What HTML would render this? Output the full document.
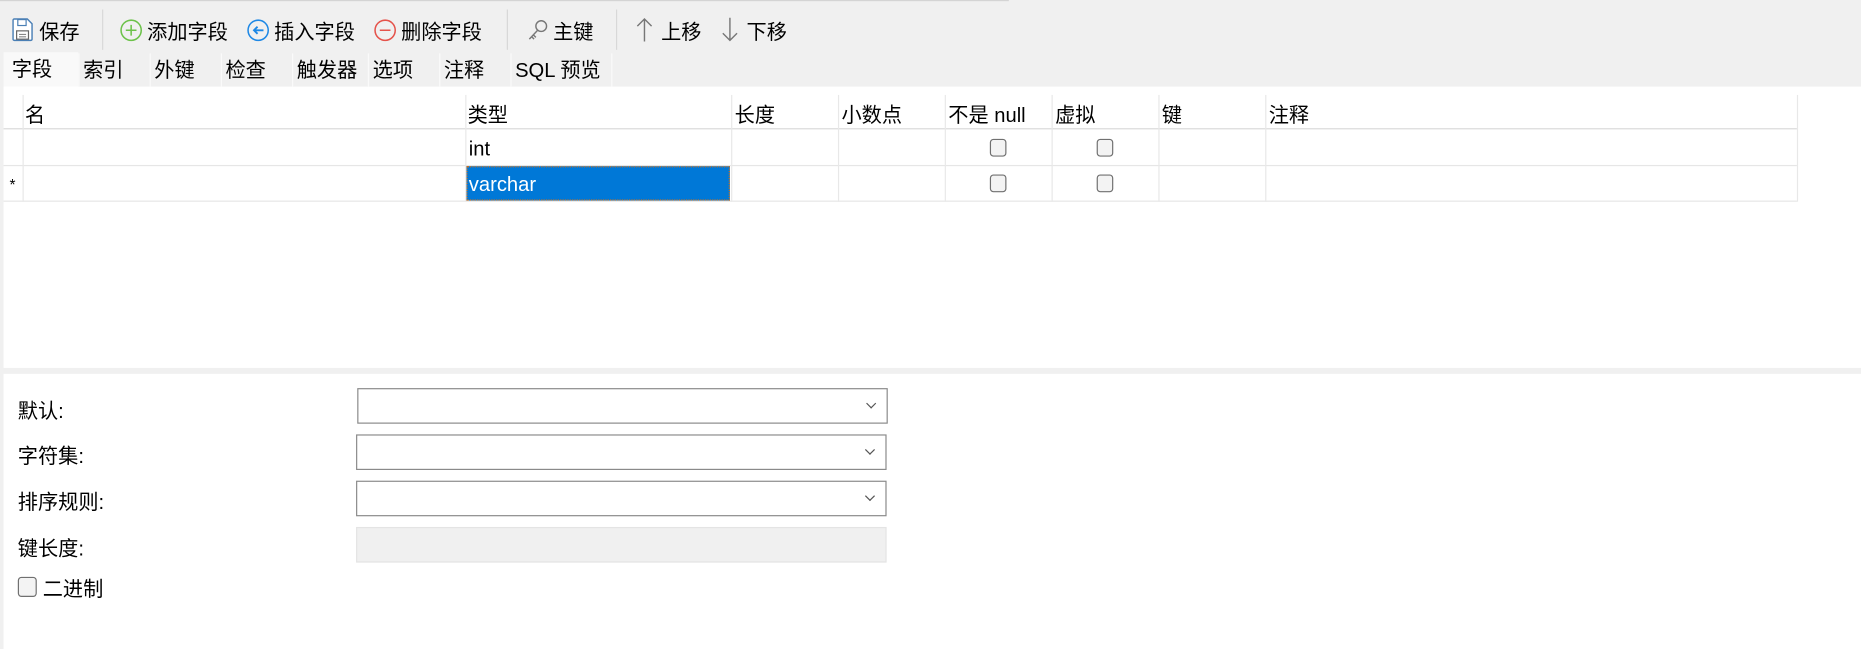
<!DOCTYPE html>
<html><head><meta charset="utf-8"><style>
html,body{margin:0;padding:0;width:1861px;height:649px;overflow:hidden;background:#f0f0f0}
#w{position:absolute;left:0;top:0;width:1568px;height:547px;transform:scale(1.18686);transform-origin:0 0;font-family:"Liberation Sans","Noto Sans CJK SC",sans-serif;font-size:17px;color:#000}
.a{position:absolute;white-space:nowrap;line-height:20px}
.sep{position:absolute;top:8px;width:1px;height:34px;background:#d8d8d8}
.tab{position:absolute;top:45px;height:28px;line-height:30px;background:#f0f0f0;border-left:1px solid #fafafa;padding-left:3px;box-sizing:border-box}
.vl{position:absolute;width:1px;background:#e8e8e8}
.hl{position:absolute;height:1px;background:#e6e6e6}
.cb{position:absolute;width:14px;height:15px;border:1px solid #707070;border-radius:3px;background:#f3f3f3;box-sizing:border-box}
.combo{position:absolute;left:300px;width:447px;height:30px;border:1px solid #8a8a8a;background:#fff;box-sizing:border-box}
.combo:after{content:"";position:absolute;right:10px;top:9px;width:5px;height:5px;border-right:1px solid #555;border-bottom:1px solid #555;transform:rotate(45deg)}
</style></head><body><div id="w">
<div style="position:absolute;left:0;top:0;width:850px;height:1px;background:#d4d4d4"></div>
<svg class="a" style="left:10px;top:15px" width="18" height="20" viewBox="0 0 18 20"><path d="M2 1h11l4 4v13a1 1 0 0 1-1 1H2a1 1 0 0 1-1-1V2a1 1 0 0 1 1-1z" fill="#fff" stroke="#4a7fb5" stroke-width="1.2"/><rect x="5" y="1.5" width="7" height="5" fill="none" stroke="#4a7fb5"/><rect x="4" y="11" width="10" height="7" fill="none" stroke="#666"/><path d="M6 14h6M6 16h6" stroke="#888"/></svg>
<div class="a" style="left:33px;top:18px">保存</div>
<div class="sep" style="left:86px"></div>
<svg class="a" style="left:101px;top:16px" width="19" height="19"><circle cx="9.5" cy="9.5" r="8.5" fill="none" stroke="#6cc24a" stroke-width="1.3"/><path d="M9.5 5v9M5 9.5h9" stroke="#6cc24a" stroke-width="1.3"/></svg>
<div class="a" style="left:124px;top:18px">添加字段</div>
<svg class="a" style="left:208px;top:16px" width="19" height="19"><circle cx="9.5" cy="9.5" r="8.5" fill="none" stroke="#1e88e5" stroke-width="1.3"/><path d="M14 9.5H6M9 6.5l-3 3 3 3" fill="none" stroke="#1e88e5" stroke-width="1.6"/></svg>
<div class="a" style="left:231px;top:18px">插入字段</div>
<svg class="a" style="left:315px;top:16px" width="19" height="19"><circle cx="9.5" cy="9.5" r="8.5" fill="none" stroke="#e5534b" stroke-width="1.3"/><path d="M5 9.5h9" stroke="#e5534b" stroke-width="1.3"/></svg>
<div class="a" style="left:338px;top:18px">删除字段</div>
<div class="sep" style="left:427px"></div>
<svg class="a" style="left:444px;top:16px" width="18" height="19"><circle cx="12" cy="6" r="4.5" fill="none" stroke="#777" stroke-width="1.2"/><path d="M9 9.5L2 17M4 15l2 2M5.5 13.5l2 2" stroke="#777" stroke-width="1.2" fill="none"/></svg>
<div class="a" style="left:466px;top:18px">主键</div>
<div class="sep" style="left:519px"></div>
<svg class="a" style="left:536px;top:14px" width="14" height="22"><path d="M7 21V2M1 8l6-6 6 6" fill="none" stroke="#777" stroke-width="1.2"/></svg>
<div class="a" style="left:557px;top:18px">上移</div>
<svg class="a" style="left:608px;top:14px" width="14" height="22"><path d="M7 1v19M1 14l6 6 6-6" fill="none" stroke="#777" stroke-width="1.2"/></svg>
<div class="a" style="left:629px;top:18px">下移</div>
<div class="tab" style="left:3px;width:63px;background:#f9f9f9;border:none;padding-left:7px;top:44px;height:30px;line-height:30px">字段</div>
<div class="tab" style="left:66px;width:60px">索引</div>
<div class="tab" style="left:126px;width:60px">外键</div>
<div class="tab" style="left:186px;width:60px">检查</div>
<div class="tab" style="left:246px;width:64px">触发器</div>
<div class="tab" style="left:310px;width:60px">选项</div>
<div class="tab" style="left:370px;width:60px">注释</div>
<div class="tab" style="left:430px;width:86px;border-right:1px solid #fafafa">SQL 预览</div>
<div class="a" style="left:3px;top:73px;width:1565px;height:237px;background:#fff"></div>
<div class="hl" style="left:3px;top:108px;width:1511px;background:#d9d9d9"></div>
<div class="hl" style="left:3px;top:139px;width:1511px"></div>
<div class="hl" style="left:3px;top:169px;width:1511px"></div>
<div class="vl" style="left:19px;top:80px;height:90px"></div>
<div class="vl" style="left:392px;top:80px;height:90px"></div>
<div class="vl" style="left:616px;top:80px;height:90px"></div>
<div class="vl" style="left:706px;top:80px;height:90px"></div>
<div class="vl" style="left:796px;top:80px;height:90px"></div>
<div class="vl" style="left:886px;top:80px;height:90px"></div>
<div class="vl" style="left:976px;top:80px;height:90px"></div>
<div class="vl" style="left:1066px;top:80px;height:90px"></div>
<div class="vl" style="left:1514px;top:80px;height:90px"></div>
<div class="a" style="left:21px;top:88px">名</div>
<div class="a" style="left:394px;top:88px">类型</div>
<div class="a" style="left:619px;top:88px">长度</div>
<div class="a" style="left:709px;top:88px">小数点</div>
<div class="a" style="left:799px;top:88px">不是 null</div>
<div class="a" style="left:889px;top:88px">虚拟</div>
<div class="a" style="left:979px;top:88px">键</div>
<div class="a" style="left:1069px;top:88px">注释</div>
<div class="a" style="left:395px;top:116px">int</div>
<div class="a" style="left:8px;top:146px;font-size:13px">*</div>
<div class="a" style="left:393px;top:140px;width:222px;height:29px;background:#0078d7;outline:1px dotted #c87020;outline-offset:-1px;color:#fff;line-height:32px;padding-left:2px;box-sizing:border-box">varchar</div>
<div class="cb" style="left:834px;top:117px"></div>
<div class="cb" style="left:924px;top:117px"></div>
<div class="cb" style="left:834px;top:147px"></div>
<div class="cb" style="left:924px;top:147px"></div>
<div class="a" style="left:3px;top:315px;width:1565px;height:232px;background:#fff"></div>
<div class="a" style="left:15px;top:337px">默认:</div>
<div class="a" style="left:15px;top:375px">字符集:</div>
<div class="a" style="left:15px;top:414px">排序规则:</div>
<div class="a" style="left:15px;top:453px">键长度:</div>
<div class="combo" style="left:301px;top:327px"></div>
<div class="combo" style="top:366px"></div>
<div class="combo" style="top:405px"></div>
<div class="a" style="left:300px;top:444px;width:447px;height:30px;background:#f0f0f0;border:1px solid #e4e4e4;box-sizing:border-box"></div>
<div class="cb" style="left:15px;top:486px;width:16px;height:17px"></div>
<div class="a" style="left:36px;top:487px">二进制</div>
</div></body></html>
